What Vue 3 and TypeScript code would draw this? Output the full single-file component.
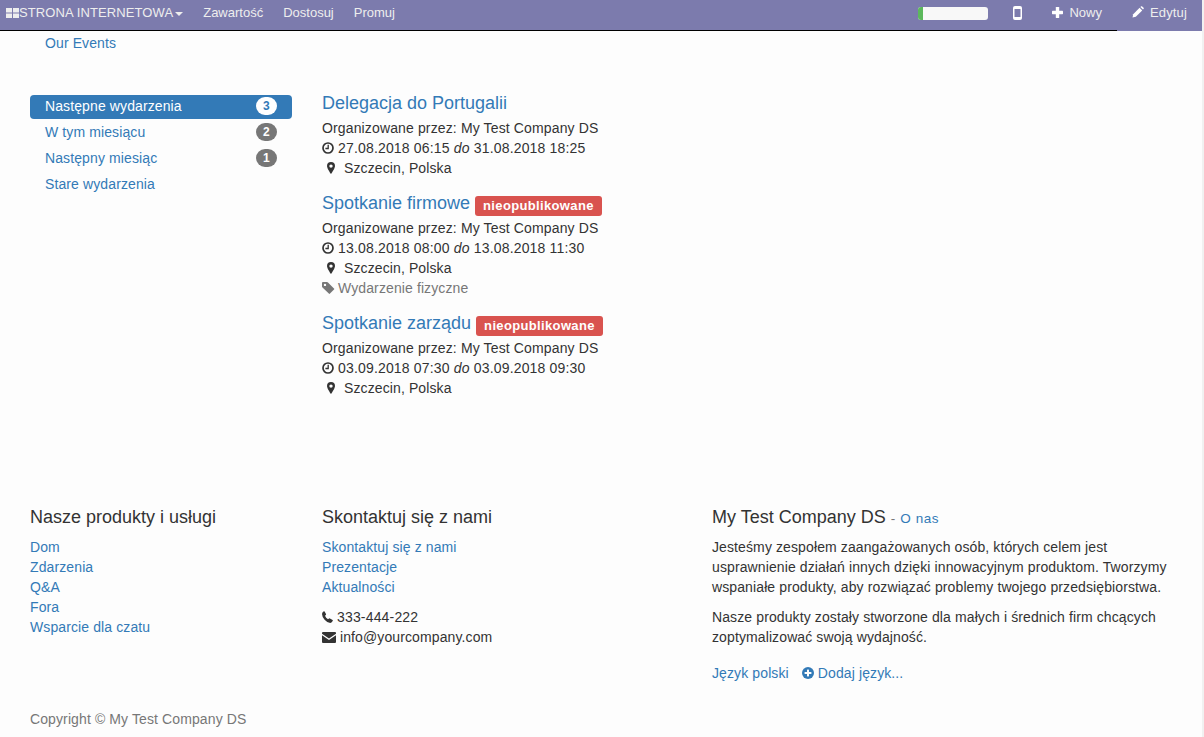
<script setup lang="ts">
interface EventItem {
  title: string
  unpublished: boolean
  start: string
  end: string
  tag?: string
}

const navItems = ['Zawartość', 'Dostosuj', 'Promuj']

const filters = [
  { label: 'Następne wydarzenia', count: 3, active: true },
  { label: 'W tym miesiącu', count: 2, active: false },
  { label: 'Następny miesiąc', count: 1, active: false },
  { label: 'Stare wydarzenia', count: null, active: false },
]

const events: EventItem[] = [
  { title: 'Delegacja do Portugalii', unpublished: false, start: '27.08.2018 06:15', end: '31.08.2018 18:25' },
  { title: 'Spotkanie firmowe', unpublished: true, start: '13.08.2018 08:00', end: '13.08.2018 11:30', tag: 'Wydarzenie fizyczne' },
  { title: 'Spotkanie zarządu', unpublished: true, start: '03.09.2018 07:30', end: '03.09.2018 09:30' },
]

const productLinks = ['Dom', 'Zdarzenia', 'Q&A', 'Fora', 'Wsparcie dla czatu']
const contactLinks = ['Skontaktuj się z nami', 'Prezentacje', 'Aktualności']
</script>

<template>
  <div class="page">
    <header class="topbar">
      <div class="nav-left">
        <a class="brand">
          <svg class="apps" width="13" height="10" viewBox="0 0 13 10" fill="#eee">
            <rect x="0" y="0" width="6" height="4.500" />
            <rect x="7" y="0" width="6" height="4.500" />
            <rect x="0" y="5.500" width="6" height="4.500" />
            <rect x="7" y="5.500" width="6" height="4.500" />
          </svg>
          <span>STRONA INTERNETOWA</span>
          <i class="caret"></i>
        </a>
        <a v-for="item in navItems" :key="item" class="nav-link">{{ item }}</a>
      </div>
      <div class="nav-right">
        <div class="progress"><div class="progress-bar"></div></div>
        <svg class="phone" width="9" height="14" viewBox="0 0 9 14">
          <rect x="0" y="0" width="9" height="14" rx="2" fill="#fff" />
          <rect x="1.500" y="3" width="6" height="8" fill="#7c7bad" />
        </svg>
        <a class="nav-action new">
          <svg class="plus" width="11" height="11" viewBox="0 0 11 11" fill="#fff">
            <rect x="3.800" y="0" width="3.400" height="11" rx=".6" />
            <rect x="0" y="3.800" width="11" height="3.400" rx=".6" />
          </svg>
          <span>Nowy</span>
        </a>
        <a class="nav-action edit">
          <svg width="12" height="12" viewBox="0 0 12 12" fill="#fff">
            <path d="M0.500 11.500 L1.200 8.200 L7.600 1.800 L10.200 4.400 L3.800 10.800 Z" />
            <path d="M8.400 1 L9.200 .3 Q9.700 0 10.200 .4 L11.600 1.800 Q12 2.300 11.700 2.800 L11 3.600 Z" />
          </svg>
          <span>Edytuj</span>
        </a>
      </div>
    </header>

    <main class="content">
      <ul class="breadcrumb-row">
        <li><a>Our Events</a></li>
      </ul>

      <div class="row events-row">
        <aside class="col-3">
          <ul class="pills">
            <li v-for="f in filters" :key="f.label" class="pill" :class="{ active: f.active }">
              <span>{{ f.label }}</span>
              <span v-if="f.count !== null" class="count">{{ f.count }}</span>
            </li>
          </ul>
        </aside>
        <section class="col-9 event-list">
          <article v-for="e in events" :key="e.title" class="event">
            <h4 class="event-title">
              <a>{{ e.title }}</a>
              <span v-if="e.unpublished" class="label">nieopublikowane</span>
            </h4>
            <div class="organizer">Organizowane przez: My Test Company DS</div>
            <div class="with-icon">
              <svg class="ic" width="12" height="12" viewBox="0 0 12 12">
                <circle cx="6" cy="6" r="5" fill="none" stroke="#333" stroke-width="1.700" />
                <path d="M6.200 2.800 V6.500 H3.400" fill="none" stroke="#333" stroke-width="1.300" />
              </svg>
              <span class="dates">{{ e.start }} <em>do</em> {{ e.end }}</span>
            </div>
            <div class="place">
              <svg width="8" height="12" viewBox="0 0 8 12">
                <path fill="#333" fill-rule="evenodd" d="M4 0 A4 4 0 0 1 8 4 C8 6 5.500 10 4 12 C2.500 10 0 6 0 4 A4 4 0 0 1 4 0 Z M4 2.400 A1.700 1.700 0 1 0 4 5.800 A1.700 1.700 0 1 0 4 2.400 Z" />
              </svg>
              <span>Szczecin, Polska</span>
            </div>
            <div v-if="e.tag" class="tag with-icon">
              <svg class="ic" width="13" height="12" viewBox="0 0 13 12">
                <path fill="#777" fill-rule="evenodd" d="M0 1 Q0 0 1 0 H5 Q5.600 0 6 .4 L12 6.400 Q12.600 7 12 7.600 L8 11.600 Q7.400 12.200 6.800 11.600 L.5 5.600 Q0 5 0 4.400 Z M3 1.700 A1.200 1.200 0 1 0 3 4.100 A1.200 1.200 0 1 0 3 1.700 Z" />
              </svg>
              <span>{{ e.tag }}</span>
            </div>
          </article>
        </section>
      </div>

      <footer class="footer">
        <div class="row">
          <div class="col-3">
            <h4>Nasze produkty i usługi</h4>
            <ul class="links">
              <li v-for="l in productLinks" :key="l"><a>{{ l }}</a></li>
            </ul>
          </div>
          <div class="col-4">
            <h4>Skontaktuj się z nami</h4>
            <ul class="links">
              <li v-for="l in contactLinks" :key="l"><a>{{ l }}</a></li>
            </ul>
            <ul class="links contact">
              <li class="with-icon">
                <svg width="11" height="12" viewBox="0 0 11 12">
                  <path fill="#333" d="M2.600 .4 L4 3 Q4.200 3.500 3.800 3.900 L3 4.700 Q3.800 6.800 6 8.300 L7 7.500 Q7.400 7.200 7.900 7.400 L10.600 9 Q11 9.300 10.800 9.800 Q10 11.900 8.300 11.900 Q5 11.800 2.600 8.800 Q0 5.600 0 3 Q0 1.200 1.800 .2 Q2.300 0 2.600 .4 Z" />
                </svg>
                <span class="dates">333-444-222</span>
              </li>
              <li class="with-icon">
                <svg width="14" height="11" viewBox="0 0 14 11">
                  <path fill="#333" d="M0 1 Q0 0 1 0 H13 Q14 0 14 1 V1.800 L7 6.500 L0 1.800 Z M0 3.300 L7 8 L14 3.300 V10 Q14 11 13 11 H1 Q0 11 0 10 Z" />
                </svg>
                <span>info@yourcompany.com</span>
              </li>
            </ul>
          </div>
          <div class="col-5">
            <h4 class="about-title">My Test Company DS <small>- <a>O nas</a></small></h4>
            <p>Jesteśmy zespołem zaangażowanych osób, których celem jest usprawnienie działań innych dzięki innowacyjnym produktom. Tworzymy wspaniałe produkty, aby rozwiązać problemy twojego przedsiębiorstwa.</p>
            <p>Nasze produkty zostały stworzone dla małych i średnich firm chcących zoptymalizować swoją wydajność.</p>
            <div class="langs">
              <a>Język polski</a>
              <a class="add-lang">
                <svg width="12" height="12" viewBox="0 0 12 12">
                  <circle cx="6" cy="6" r="6" fill="#337ab7" />
                  <rect x="2.600" y="5" width="6.800" height="2" fill="#fdfdfd" />
                  <rect x="5" y="2.600" width="2" height="6.800" fill="#fdfdfd" />
                </svg>
                <span>Dodaj język...</span>
              </a>
            </div>
          </div>
        </div>
        <div class="copyright">Copyright © <a>My Test Company DS</a></div>
      </footer>
    </main>
  </div>
</template>

<style>
html, body {
  margin: 0;
  background: #fdfdfd;
}
</style>

<style scoped>
.page {
  box-sizing: border-box;
  width: 1204px;
  height: 737px;
  overflow: hidden;
  border-right: 2px solid #f1f1f1;
  font-family: "Liberation Sans", Arial, sans-serif;
  font-size: 14px;
  line-height: 20px;
  letter-spacing: .11px;
  color: #333;
  background: #fdfdfd;
}
a {
  color: #337ab7;
  text-decoration: none;
}
ul {
  list-style: none;
  margin: 0;
  padding: 0;
}
.topbar {
  display: flex;
  justify-content: space-between;
  height: 30px;
  background: #7c7bad;
  border-bottom: 1px solid #000;
  font-size: 13px;
  line-height: 26px;
  letter-spacing: 0;
}
.nav-left {
  display: flex;
  align-items: flex-start;
}
.brand {
  display: flex;
  align-items: center;
  height: 26px;
  padding-left: 6px;
  color: #eee;
  letter-spacing: .1px;
}
.apps {
  margin-top: -1px;
}
.caret {
  display: block;
  width: 0;
  height: 0;
  margin-left: 2px;
  margin-top: 2px;
  border-top: 4px solid #eee;
  border-left: 4px solid transparent;
  border-right: 4px solid transparent;
}
.nav-link {
  color: #eee;
  margin-left: 20px;
}
.nav-right {
  display: flex;
  align-items: flex-start;
}
.progress {
  width: 70px;
  height: 13px;
  margin-top: 7px;
  border-radius: 3px;
  background: #f8f8f8;
  overflow: hidden;
}
.progress-bar {
  width: 5px;
  height: 100%;
  background: #5cb85c;
}
.phone {
  margin-top: 6px;
  margin-left: 25px;
}
.nav-action {
  display: flex;
  align-items: center;
  height: 26px;
  color: #eee;
  gap: 6px;
}
.plus {
  margin-top: -2px;
}
.new {
  margin-left: 30px;
}
.edit {
  height: 31px;
  align-items: flex-start;
  width: 85px;
  box-sizing: border-box;
  margin-left: 15px;
  padding-left: 15px;
  letter-spacing: .15px;
  background: #7c7bad;
}
.edit svg {
  margin-top: 6px;
}
.content {
  padding: 0 17px 0 15px;
}
.breadcrumb-row {
  padding: 2px 0 0 30px;
  height: 40px;
}
.row {
  display: flex;
}
.events-row {
  margin-top: 21px;
  height: 413px;
}
.col-3, .col-4, .col-5, .col-9 {
  box-sizing: border-box;
  padding: 0 15px;
}
.col-3 { width: 292px; }
.col-4 { width: 390px; }
.col-5 { width: 488px; }
.col-9 { width: 878px; }
.pills {
  padding-top: 1px;
}
.pill {
  display: flex;
  justify-content: space-between;
  align-items: center;
  box-sizing: border-box;
  height: 24px;
  margin-bottom: 2px;
  padding: 0 15px 2px;
  border-radius: 4px;
  color: #337ab7;
}
.pill.active {
  background: #337ab7;
  color: #fff;
}
.count {
  min-width: 7px;
  padding: 3px 7px;
  font-size: 12px;
  font-weight: 700;
  line-height: 1;
  text-align: center;
  color: #fff;
  background: #777;
  border-radius: 10px;
}
.pill.active .count {
  background: #fff;
  color: #337ab7;
}
.event-list {
  margin-top: -1px;
}
.event {
  margin-bottom: 15px;
}
.event-title {
  box-sizing: border-box;
  height: 25px;
  margin: 0;
  font-size: 18px;
  font-weight: 400;
  line-height: 20px;
  letter-spacing: 0;
}
.organizer {
  letter-spacing: .135px;
}
.label {
  display: inline-block;
  margin-left: 5px;
  padding: 3px 8px 4px;
  font-size: 13px;
  font-weight: 700;
  line-height: 1;
  letter-spacing: .35px;
  color: #fff;
  background: #d9534f;
  border-radius: 3px;
  vertical-align: -1px;
}
.with-icon {
  display: flex;
  align-items: center;
  gap: 4px;
}
.dates {
  letter-spacing: .17px;
}
.place {
  display: flex;
  align-items: center;
  gap: 9px;
  padding-left: 5px;
}
.tag {
  gap: 3px;
  color: #777;
}
h4 {
  margin: 0 0 10px;
  font-size: 18px;
  font-weight: 400;
  line-height: 20px;
  letter-spacing: 0;
  color: #333;
}
.about-title {
  margin-bottom: 8px;
}
small {
  font-size: 13.500px;
  letter-spacing: .6px;
  color: #777;
}
.contact {
  margin-top: 10px;
}
p {
  margin: 0 0 10px;
}
.langs {
  display: flex;
  gap: 13px;
  margin-top: 16px;
}
.add-lang {
  display: flex;
  align-items: center;
  gap: 4px;
}
.copyright {
  margin-top: 26px;
  padding-left: 15px;
  color: #777;
}
.copyright a {
  color: #777;
}
</style>
